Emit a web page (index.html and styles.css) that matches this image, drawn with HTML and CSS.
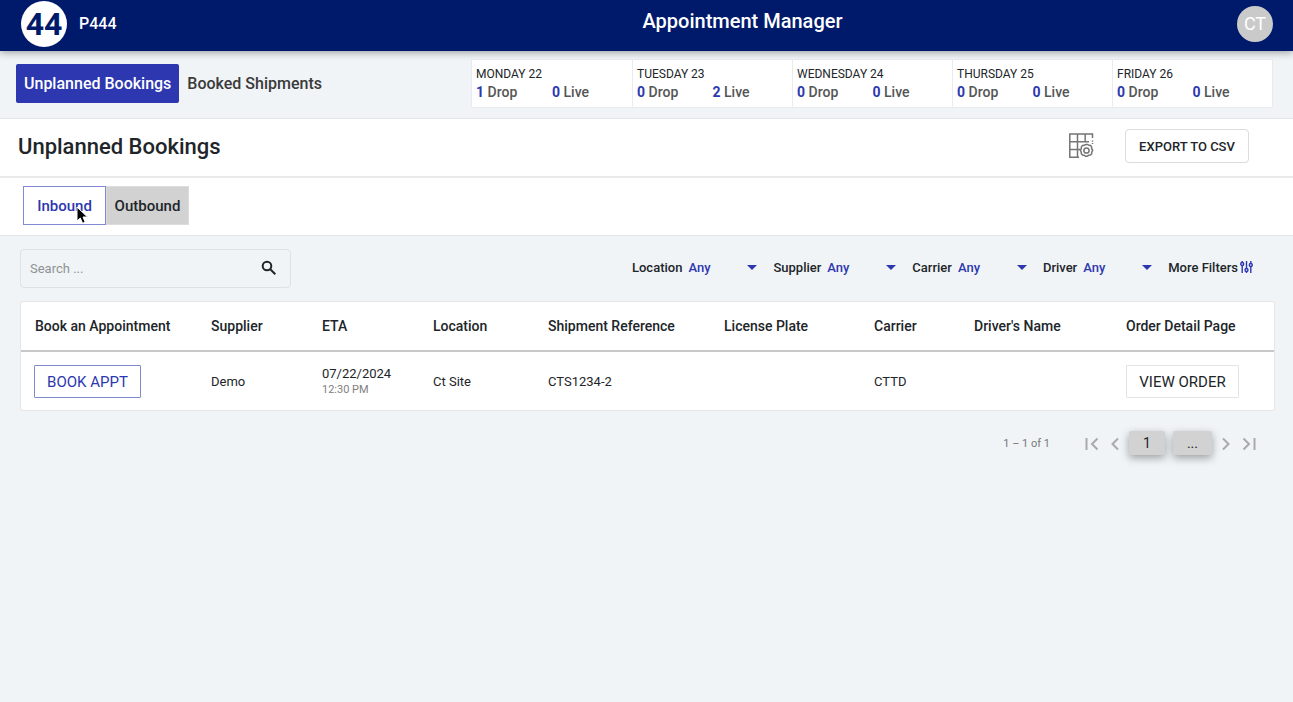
FILE: index.html
```html
<!DOCTYPE html>
<html lang="en">
<head>
    <meta charset="UTF-8">
    <meta name="viewport" content="width=device-width, initial-scale=1.0">
    <title>Appointment Manager</title>
    <link rel="stylesheet" href="styles.css">
</head>
<body>
    <header class="header">
        <div class="brand">
            <span class="logo">44</span>
            <span class="brand-name">P444</span>
        </div>
        <h1 class="app-title">Appointment Manager</h1>
        <button class="avatar">CT</button>
    </header>

    <nav class="nav">
        <a class="nav-link active" href="#">Unplanned Bookings</a>
        <a class="nav-link" href="#">Booked Shipments</a>
        <div class="days">
            <div class="day">
                <div class="day-name">MONDAY 22</div>
                <div class="counts"><span><b>1</b> Drop</span><span><b>0</b> Live</span></div>
            </div>
            <div class="day">
                <div class="day-name">TUESDAY 23</div>
                <div class="counts"><span><b>0</b> Drop</span><span><b>2</b> Live</span></div>
            </div>
            <div class="day">
                <div class="day-name">WEDNESDAY 24</div>
                <div class="counts"><span><b>0</b> Drop</span><span><b>0</b> Live</span></div>
            </div>
            <div class="day">
                <div class="day-name">THURSDAY 25</div>
                <div class="counts"><span><b>0</b> Drop</span><span><b>0</b> Live</span></div>
            </div>
            <div class="day">
                <div class="day-name">FRIDAY 26</div>
                <div class="counts"><span><b>0</b> Drop</span><span><b>0</b> Live</span></div>
            </div>
        </div>
    </nav>

    <div class="page-bar">
        <h2 class="page-title">Unplanned Bookings</h2>
        <button class="icon-button" aria-label="Table settings">
            <svg width="25" height="26" viewBox="0 0 25 26" fill="none" stroke="#757575" stroke-width="1.5">
                <path d="M10 24.3H.8V1H23.500V5M23.500 7.500v1.200M23.500 10v1M.8 8.700H20M.8 16.500H11M8.500 1v23.300M16.200 1v7.700"/>
                <path d="M15.300 12.300l1.400-.9h1.800l1.400.9 1.700.2 1 1.400.1 1.800 1 1.600-.9 1.700-.2 1.900-1.300 1.200-1.700.2-1.500 1h-1.400l-1.500-1-1.700-.3-1.200-1.300-.1-1.700-.9-1.700 1-1.600.1-1.900 1.200-1.300z"/>
                <circle cx="17.500" cy="17.500" r="2.600"/>
            </svg>
        </button>
        <button class="export">EXPORT TO CSV</button>
    </div>

    <div class="tabs">
        <button class="tab selected">Inbound
            <svg class="cursor" width="14" height="20" viewBox="0 0 14 20">
                <path d="M1 1v14l3.300-3 2.300 5.300 2.600-1.100L7 11h4.500z" fill="#000" stroke="#fff" stroke-width="1"/>
            </svg>
        </button>
        <button class="tab">Outbound</button>
    </div>

    <main class="main">
        <div class="filters">
            <div class="search">
                <input type="text" placeholder="Search ..." aria-label="Search">
                <svg width="18" height="18" viewBox="0 0 18 18" fill="none" stroke="#212529" stroke-width="2">
                    <circle cx="7" cy="6" r="4.300"/>
                    <path d="M10 9l5.300 5.300"/>
                </svg>
            </div>
            <div class="filter">
                <label for="location">Location</label>
                <span class="select"><select id="location"><option>Any</option></select></span>
            </div>
            <div class="filter">
                <label for="supplier">Supplier</label>
                <span class="select"><select id="supplier"><option>Any</option></select></span>
            </div>
            <div class="filter">
                <label for="carrier">Carrier</label>
                <span class="select"><select id="carrier"><option>Any</option></select></span>
            </div>
            <div class="filter">
                <label for="driver">Driver</label>
                <span class="select"><select id="driver"><option>Any</option></select></span>
            </div>
            <button class="more">More Filters
                <svg width="13" height="14" viewBox="0 0 13 14" fill="none" stroke="#2d37af" stroke-width="1.400">
                    <path d="M2.200 1v1.300M2.200 5.600V13M6.500 1v7.300M6.500 11.600V13M10.800 1v2.300M10.800 6.600V13"/>
                    <circle cx="2.200" cy="4" r="1.500"/>
                    <circle cx="6.500" cy="10" r="1.500"/>
                    <circle cx="10.800" cy="5" r="1.500"/>
                </svg>
            </button>
        </div>

        <table class="bookings">
            <colgroup>
                <col class="col-book"><col class="col-supplier"><col class="col-eta">
                <col class="col-location"><col class="col-reference"><col class="col-plate">
                <col class="col-carrier"><col class="col-driver"><col>
            </colgroup>
            <thead>
                <tr>
                    <th>Book an Appointment</th>
                    <th>Supplier</th>
                    <th>ETA</th>
                    <th>Location</th>
                    <th>Shipment Reference</th>
                    <th>License Plate</th>
                    <th>Carrier</th>
                    <th>Driver's Name</th>
                    <th>Order Detail Page</th>
                </tr>
            </thead>
            <tbody>
                <tr>
                    <td><button class="row-button book">BOOK APPT</button></td>
                    <td>Demo</td>
                    <td><div class="date">07/22/2024</div><div class="time">12:30 PM</div></td>
                    <td>Ct Site</td>
                    <td>CTS1234-2</td>
                    <td></td>
                    <td>CTTD</td>
                    <td></td>
                    <td><button class="row-button">VIEW ORDER</button></td>
                </tr>
            </tbody>
        </table>

        <div class="pagination">
            <span class="range">1 – 1 of 1</span>
            <button class="arrow" aria-label="First page">
                <svg width="14" height="14" viewBox="0 0 14 14"><path d="M1.500 1v12M12.500 1.500L7 7l5.500 5.500"/></svg>
            </button>
            <button class="arrow" aria-label="Previous page">
                <svg width="8" height="14" viewBox="0 0 8 14"><path d="M7 1.500L1.500 7 7 12.500"/></svg>
            </button>
            <button class="page">1</button>
            <button class="page">...</button>
            <button class="arrow" aria-label="Next page">
                <svg width="8" height="14" viewBox="0 0 8 14"><path d="M1 1.500L6.500 7 1 12.500"/></svg>
            </button>
            <button class="arrow" aria-label="Last page">
                <svg width="14" height="14" viewBox="0 0 14 14"><path d="M1.500 1.500L7 7l-5.500 5.500M12.500 1v12"/></svg>
            </button>
        </div>
    </main>
</body>
</html>
```

FILE: styles.css
```css
* {
    box-sizing: border-box;
}

body {
    margin: 0;
    font-family: Roboto, Arial, sans-serif;
    font-size: 13px;
    color: #212529;
    background-color: #f0f4f7;
}

button, input, select {
    font-family: inherit;
    color: inherit;
    margin: 0;
}

button {
    padding: 0;
    background: none;
    border: none;
    cursor: pointer;
}

svg {
    display: block;
}

/* Header */
.header {
    display: flex;
    align-items: center;
    height: 51px;
    padding: 0 20px 4px 0;
    color: white;
    background-color: #001a6b;
    box-shadow: 0 1px 8px rgba(0, 0, 0, 0.4);
    position: relative;
}

.brand {
    display: flex;
    align-items: center;
    gap: 12px;
    width: 248px;
    padding-left: 21px;
}

.logo {
    width: 46px;
    height: 46px;
    border-radius: 50%;
    background-color: white;
    color: #001a6b;
    font-size: 32px;
    font-weight: 700;
    line-height: 46px;
    text-align: center;
}

.brand-name {
    font-size: 16px;
    font-weight: 500;
}

.app-title {
    flex: 1;
    margin: 0;
    padding-bottom: 6px;
    font-size: 20px;
    font-weight: 500;
    text-align: center;
}

.avatar {
    width: 36px;
    height: 36px;
    border-radius: 50%;
    background-color: #cacaca;
    color: white;
    font-size: 18px;
}

/* Top navigation */
.nav {
    display: flex;
    align-items: center;
    min-height: 68px;
    padding: 0 20px 2px 16px;
    border-bottom: 1px solid #e1e5e9;
}

.nav-link {
    padding: 0 8px;
    border-radius: 2px;
    color: #3a3a3a;
    font-size: 16px;
    font-weight: 500;
    line-height: 39px;
    text-decoration: none;
}

.nav-link.active {
    background-color: #2d37af;
    color: white;
}

.days {
    display: grid;
    grid-template-columns: repeat(5, 1fr);
    width: 64%;
    max-width: 802px;
    margin-left: auto;
    border: 1px solid #e8ecf0;
    background-color: white;
}

.day {
    padding: 5px 4px;
    border-left: 1px solid #e8ecf0;
}

.day:first-child {
    border-left: none;
}

.day-name {
    font-size: 12px;
    line-height: 18px;
}

.counts {
    display: grid;
    grid-template-columns: 1fr 1fr;
    color: #555;
    font-size: 14px;
    font-weight: 500;
    line-height: 19px;
}

.counts b {
    color: #2d37af;
    font-weight: 700;
}

/* Page title */
.page-bar {
    display: flex;
    align-items: center;
    min-height: 59px;
    padding: 0 44px 3px 18px;
    border-bottom: 2px solid #e9e9e9;
    background-color: white;
}

.page-title {
    flex: 1;
    margin: 0;
    font-size: 22px;
    font-weight: 500;
}

.export {
    width: 124px;
    height: 34px;
    margin-left: 31px;
    border: 1px solid #dadce0;
    border-radius: 4px;
    font-size: 13px;
    font-weight: 500;
}

/* Inbound / outbound */
.tabs {
    display: flex;
    padding: 8px 23px 10px;
    border-bottom: 1px solid #e1e5e9;
    background-color: white;
}

.tab {
    position: relative;
    width: 83px;
    height: 39px;
    border: 1px solid #dcdcdc;
    background-color: #d2d2d2;
    font-size: 15px;
    font-weight: 500;
}

.tab.selected {
    border-color: #8289d3;
    background-color: white;
    color: #2d37af;
}

.cursor {
    position: absolute;
    left: 52px;
    top: 19px;
}

/* Filters */
.main {
    padding: 13px 18px 0 20px;
}

.filters {
    display: flex;
    align-items: center;
    gap: 16px;
    padding-right: 22px;
    margin-bottom: 13px;
}

.search {
    display: flex;
    align-items: center;
    width: 271px;
    height: 39px;
    margin-right: auto;
    padding: 0 12px 0 9px;
    border: 1px solid #dee2e6;
    border-radius: 4px;
}

.search input {
    flex: 1;
    min-width: 0;
    padding: 0;
    border: none;
    outline: none;
    background: none;
    font-size: 13px;
}

.search input::placeholder {
    color: #8f9295;
}

.filter {
    display: flex;
    align-items: center;
    gap: 6px;
    padding-bottom: 3px;
    font-weight: 500;
}

.select {
    position: relative;
    width: 69px;
}

.select::after {
    content: "";
    position: absolute;
    right: 0;
    top: 5px;
    border: 5px solid transparent;
    border-top-color: #2d37af;
    border-bottom: none;
    pointer-events: none;
}

.select select {
    display: block;
    width: 100%;
    padding: 0;
    border: none;
    appearance: none;
    background: none;
    color: #2d37af;
    font-size: 13px;
    font-weight: 500;
}

.more {
    display: flex;
    align-items: center;
    gap: 2px;
    padding-bottom: 3px;
    font-size: 13px;
    font-weight: 500;
}

/* Bookings table */
.bookings {
    width: 100%;
    table-layout: fixed;
    border-collapse: separate;
    border-spacing: 0;
    border: 1px solid #e4e6e8;
    border-radius: 3px;
    background-color: white;
}

.col-book, .col-reference {
    width: 176px;
}

.col-supplier, .col-eta {
    width: 111px;
}

.col-location {
    width: 115px;
}

.col-plate {
    width: 150px;
}

.col-carrier {
    width: 100px;
}

.col-driver {
    width: 152px;
}

.bookings th {
    height: 50px;
    padding: 0 0 0 14px;
    border-bottom: 2px solid #c8c8c8;
    font-size: 14px;
    font-weight: 500;
    text-align: left;
}

.bookings td {
    height: 58px;
    padding: 0 0 0 14px;
}

.bookings td:first-child {
    padding-left: 13px;
}

.date {
    line-height: 16px;
}

.time {
    color: #808080;
    font-size: 11px;
    line-height: 15px;
}

.row-button {
    width: 113px;
    height: 33px;
    padding-top: 2px;
    border: 1px solid #e4e4e4;
    border-radius: 1px;
    font-size: 15px;
}

.row-button.book {
    width: 107px;
    border-color: #8289d3;
    color: #2d37af;
}

/* Pagination */
.pagination {
    display: flex;
    align-items: center;
    justify-content: flex-end;
    gap: 8px;
    padding: 20px 17px 20px 0;
}

.range {
    margin-right: 25px;
    color: #777;
    font-size: 11px;
}

.arrow {
    padding: 1px 2px 0;
}

.arrow path {
    fill: none;
    stroke: #a9a9a9;
    stroke-width: 2;
}

.page {
    height: 24px;
    padding: 0 14px;
    border-radius: 2px;
    background-color: #d2d2d2;
    box-shadow: 0 3px 8px rgba(0, 0, 0, 0.35);
    font-size: 14px;
}
```
